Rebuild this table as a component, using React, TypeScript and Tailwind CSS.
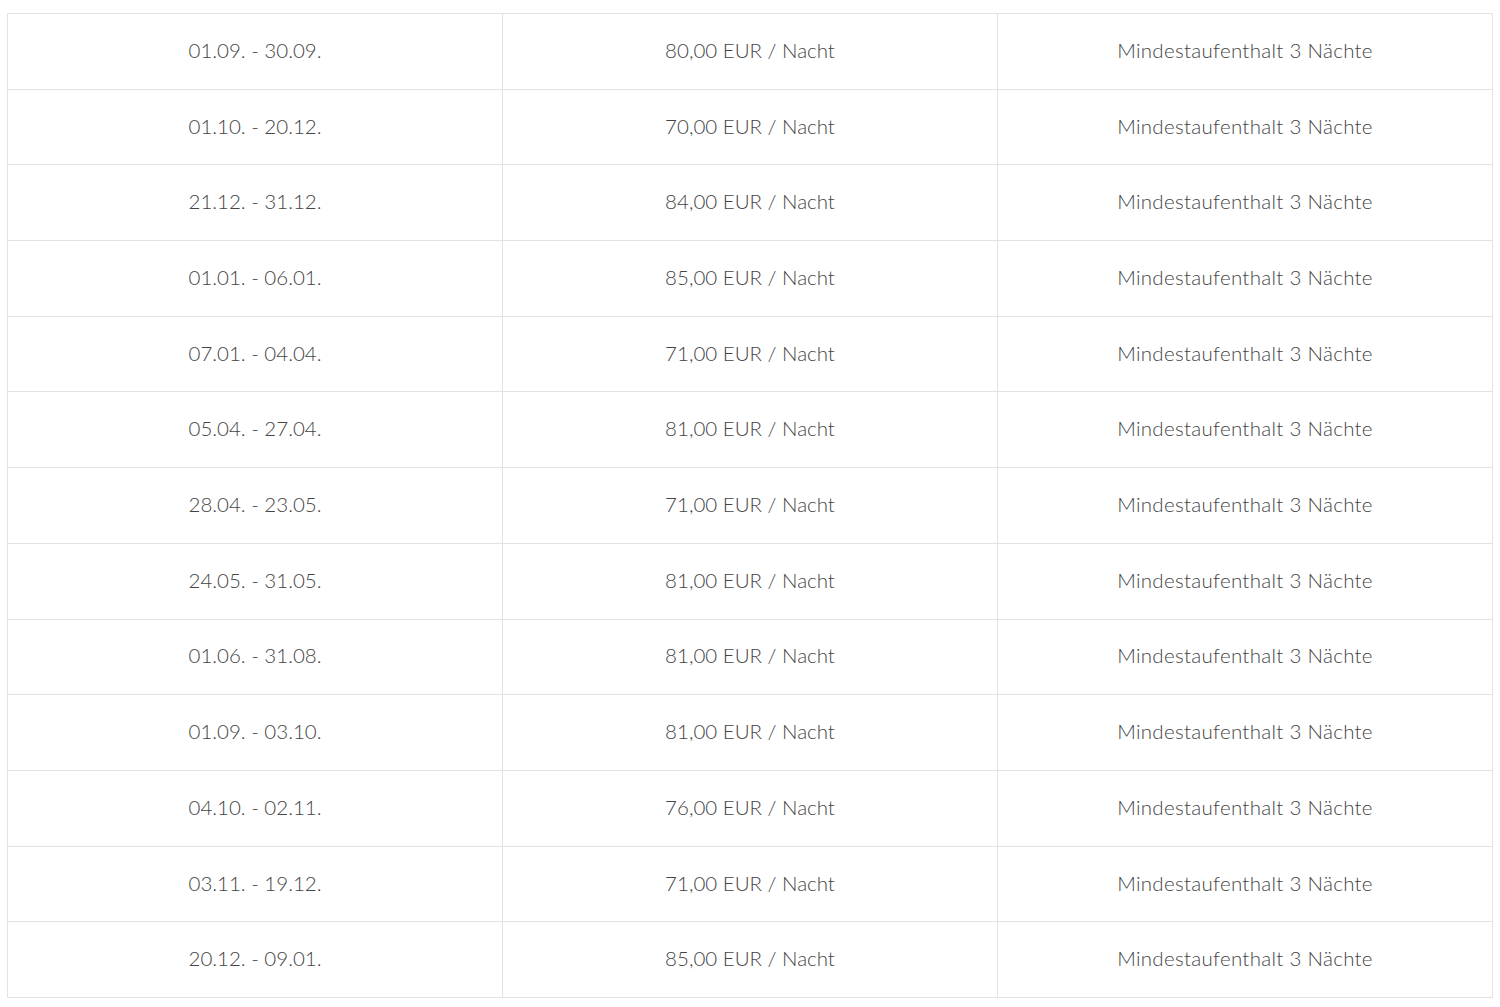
import React from 'react';

const rows: [string, string][] = [
  ['01.09. - 30.09.', '80,00'],
  ['01.10. - 20.12.', '70,00'],
  ['21.12. - 31.12.', '84,00'],
  ['01.01. - 06.01.', '85,00'],
  ['07.01. - 04.04.', '71,00'],
  ['05.04. - 27.04.', '81,00'],
  ['28.04. - 23.05.', '71,00'],
  ['24.05. - 31.05.', '81,00'],
  ['01.06. - 31.08.', '81,00'],
  ['01.09. - 03.10.', '81,00'],
  ['04.10. - 02.11.', '76,00'],
  ['03.11. - 19.12.', '71,00'],
  ['20.12. - 09.01.', '85,00'],
];

const App: React.FC = () => {
  return (
    <div className="bg-white min-h-screen pt-[13px] pl-[7px]">
      <table
        className="w-[1486px] border-collapse text-[20.5px] font-light text-[#444444] table-fixed"
        style={{ fontFamily: 'Lato, "Open Sans", sans-serif' }}
      >
        <tbody>
          {rows.map(([dates, price], i) => (
            <tr key={i} className="h-[75.7px]">
              <td className="border border-[#e3e3e3] text-center align-middle pb-[2px]">{dates}</td>
              <td className="border border-[#e3e3e3] text-center align-middle pb-[2px]">{price} EUR / Nacht</td>
              <td className="border border-[#e3e3e3] text-center align-middle pb-[2px] tracking-[0.3px]">
                Mindestaufenthalt 3 Nächte
              </td>
            </tr>
          ))}
        </tbody>
      </table>
    </div>
  );
};

export default App;
